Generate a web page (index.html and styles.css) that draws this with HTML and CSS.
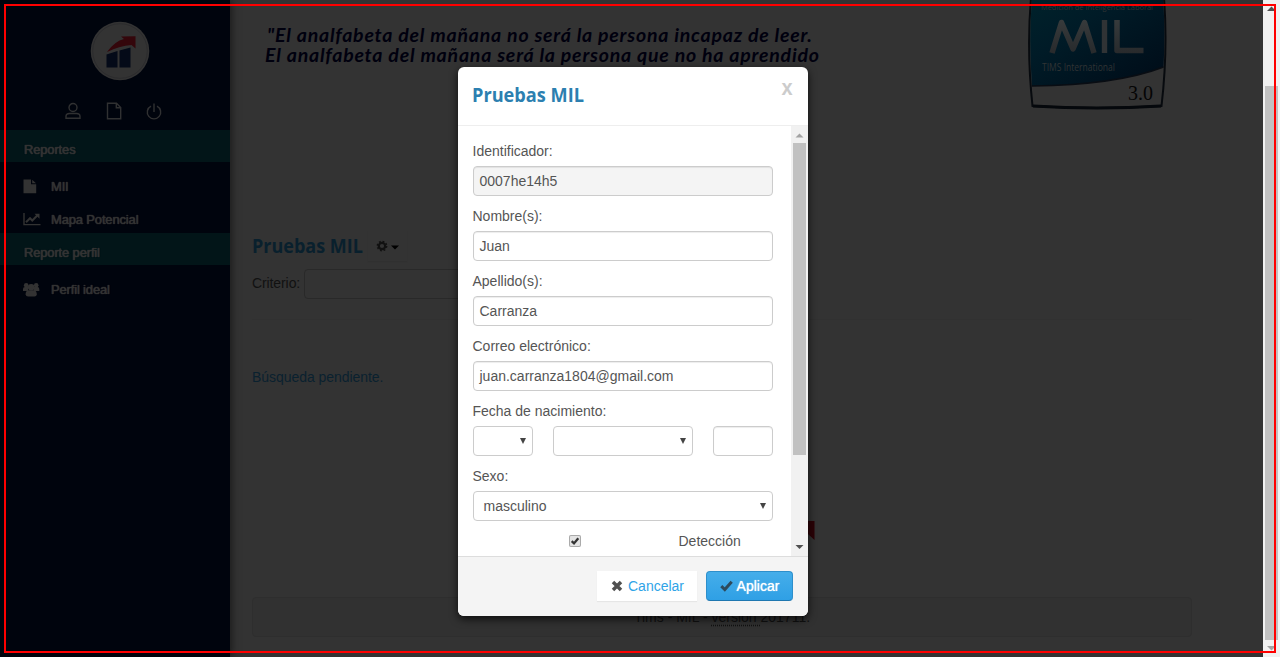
FILE: index.html
```html
<!DOCTYPE html>
<html lang="es">
<head>
<meta charset="utf-8">
<title>Pruebas MIL</title>
<link rel="stylesheet" href="styles.css">
</head>
<body>
<div class="page">
  <aside class="sidebar">
    <svg class="avatar" width="60" height="60" viewBox="0 0 60 60">
      <circle cx="30" cy="30" r="29.3" fill="#333"/>
      <circle cx="30" cy="30" r="27.3" fill="none" stroke="#292a2c" stroke-width=".8"/>
      <path d="M16.5 33.5 27.5 30V46.500H16.500zM29.500 29.500 40.500 26.500V46.500H29.500z" fill="#040a18"/>
      <path d="M17 31Q25 20 34 18L31 15.500 45.500 15.200V27.500L41.500 24Q29 25 17 31z" fill="#34060b"/>
    </svg>
    <nav class="quick">
      <svg width="16" height="18" viewBox="0 0 16 18"><circle cx="8" cy="5.500" r="4"/><path d="M1 16.300V14.500Q1 11.500 4.500 11.500H11.500Q15 11.500 15 14.500V16.300z"/></svg>
      <svg width="16" height="18" viewBox="0 0 16 18"><path d="M1.500 1.200H10.500L14.700 5.500V16.800H1.500zM10.300 1.500V5.800H14.500"/></svg>
      <svg width="16" height="18" viewBox="0 0 16 18"><path d="M5 4.200A6.700 6.700 0 1 0 11 4.200M8 1.500V10"/></svg>
    </nav>
    <h2 class="group">Reportes</h2>
    <ul class="menu">
      <li><svg width="18" height="15" viewBox="0 0 18 15"><path d="M.5.500H8V5.300H13.200V14.300H.5zM9.200.7 13 4.200H9.200z"/></svg>MII</li>
      <li><svg width="18" height="15" viewBox="0 0 18 15"><path d="M.3 1H1.700V12H17.500V13.200H.3z"/><path d="M3 10.200 7 6.200 9.300 8.500 14.500 3.300" fill="none" stroke="#333" stroke-width="2"/><path d="M11.500 1.800H16.500V6.800z"/></svg>Mapa Potencial</li>
    </ul>
    <h2 class="group">Reporte perfil</h2>
    <ul class="menu">
      <li><svg width="18" height="15" viewBox="0 0 18 15"><circle cx="3.200" cy="3.200" r="2.300"/><circle cx="13.200" cy="3.200" r="2.300"/><path d="M0 9V7Q0 5 2 5H5V9zM11 9V5H14.500Q16.300 5 16.300 7V9z"/><circle cx="8.200" cy="5.200" r="3.300"/><path d="M2.600 12.500Q2.600 8.500 5.500 8.300H11Q13.800 8.500 13.800 12.500 13.500 14.600 11.500 14.600H5Q3 14.600 2.600 12.500z"/></svg>Perfil ideal</li>
    </ul>
  </aside>
  <main class="content">
    <header class="banner">
      <svg class="quote" width="580" height="75" viewBox="0 0 580 75">
        <text x="15" y="41.500" textLength="545">"El analfabeta del mañana no será la persona incapaz de leer.</text>
        <text x="13" y="61.500" textLength="554">El analfabeta del mañana será la persona que no ha aprendido</text>
      </svg>
      <svg class="badge" width="142" height="112" viewBox="0 0 142 112">
        <defs>
          <linearGradient id="blue" x1="0" y1="0" x2="1" y2="1"><stop offset="0" stop-color="#00222b"/><stop offset=".35" stop-color="#001b27"/><stop offset="1" stop-color="#000b17"/></linearGradient>
          <linearGradient id="metal" x1="0" y1="0" x2="0" y2="1"><stop offset="0" stop-color="#373b3c"/><stop offset="1" stop-color="#282a2c"/></linearGradient>
        </defs>
        <path d="M4-2Q-.5 50 5.500 106Q70 110 134.500 106Q141 50 137-2z" fill="#333" stroke="#070a0e" stroke-width="2"/>
        <path d="M5-2Q1.500 40 5 86Q90 85 136.500 67Q138.500 30 136-2z" fill="url(#blue)"/>
        <path d="M5 86Q90 85 136.500 67" fill="none" stroke="#090d13" stroke-width="1.500"/>
        <path d="M6 106Q70 110 134 106" fill="none" stroke="#05080c" stroke-width="3"/>
        <text class="badge-small" x="14" y="10" textLength="112" lengthAdjust="spacingAndGlyphs">Medición de Inteligencia  Laboral</text>
        <path d="M25 53 34.500 22.500 46 49 57.500 22.500 67 53M90 20V50.500H116.500" fill="none" stroke="url(#metal)" stroke-width="5.500" stroke-linejoin="round"/>
        <path d="M74.800 20H80.200V53H74.800z" fill="#303335"/>
        <text class="badge-name" x="15" y="71" textLength="73" lengthAdjust="spacingAndGlyphs">TIMS International</text>
        <text class="badge-version" x="101" y="99.500" textLength="25" lengthAdjust="spacingAndGlyphs">3.0</text>
      </svg>
    </header>
    <div class="heading">
      <svg class="title title-dim" width="116" height="32" viewBox="0 0 116 32"><text x="0" y="23" textLength="111" lengthAdjust="spacingAndGlyphs">Pruebas MIL</text></svg>
      <span class="gear">
        <svg width="24" height="12" viewBox="0 0 24 12"><circle cx="6" cy="6" r="3.200" fill="none" stroke="#111" stroke-width="2.200"/><circle cx="6" cy="6" r="4.700" fill="none" stroke="#111" stroke-width="1.400" stroke-dasharray="1.850 1.840"/><path d="M15 5.500H23L19 9.500z" fill="#000"/></svg>
      </span>
    </div>
    <div class="search"><span>Criterio:</span><div class="search-box"></div></div>
    <hr class="rule">
    <p class="pending">Búsqueda pendiente.</p>
    <svg class="ribbon" width="8" height="19" viewBox="0 0 8 19"><path d="M0 0 6.500 0V19L0 13z" fill="#2b0206"/></svg>
    <footer class="footer"><span>Tims - MIL - <u>versión </u>201711.</span></footer>
  </main>
  <div class="scroll">
    <svg width="17" height="18" viewBox="0 0 17 18"><path d="M4 11 8.500 6.500 13 11z" fill="#505050"/></svg>
    <div class="scroll-thumb"></div>
    <svg width="17" height="17" viewBox="0 0 17 17"><path d="M4 6H13L8.500 10.500z" fill="#a3a3a3"/></svg>
  </div>
</div>

<section class="modal">
  <header class="modal-head">
    <svg class="title" width="116" height="32" viewBox="0 0 116 32"><text x="0" y="23" textLength="112" lengthAdjust="spacingAndGlyphs">Pruebas MIL</text></svg>
    <span class="close">x</span>
  </header>
  <div class="modal-body">
    <form class="form">
      <label>Identificador:</label><div class="field disabled">0007he14h5</div>
      <label>Nombre(s):</label><div class="field">Juan</div>
      <label>Apellido(s):</label><div class="field">Carranza</div>
      <label>Correo electrónico:</label><div class="field">juan.carranza1804@gmail.com</div>
      <label>Fecha de nacimiento:</label>
      <div class="date">
        <div class="field select"><span></span><i class="arrow"></i></div>
        <div class="field select"><span></span><i class="arrow"></i></div>
        <div class="field"></div>
      </div>
      <label>Sexo:</label><div class="field select"><span>masculino</span><i class="arrow"></i></div>
      <div class="check-row">
        <span class="checkbox"><svg width="12" height="12" viewBox="0 0 12 12"><path d="M2.700 6.200 5 8.400 9.300 3.200" fill="none" stroke="#333" stroke-width="2.300"/></svg></span>
        <span>Detección</span>
      </div>
    </form>
    <div class="modal-scroll">
      <svg width="17" height="17" viewBox="0 0 17 17"><path d="M4.500 11.500 8.500 7.500 12.500 11.500z" fill="#a3a3a3"/></svg>
      <div class="modal-thumb"></div>
      <svg width="17" height="17" viewBox="0 0 17 17"><path d="M4.500 6H12.500L8.500 10z" fill="#505050"/></svg>
    </div>
  </div>
  <footer class="modal-foot">
    <button class="btn"><svg width="12" height="12" viewBox="0 0 12 12"><path d="M2 2 10 10M10 2 2 10" stroke="#505050" stroke-width="3.500"/></svg>Cancelar</button>
    <button class="btn primary"><svg width="13" height="12" viewBox="0 0 13 12"><path d="M1.300 6.200 4.800 9.500 11.700 1.800" fill="none" stroke="#2d4a5c" stroke-width="3"/></svg>Aplicar</button>
  </footer>
</section>
<div class="outline"></div>
</body>
</html>
```

FILE: styles.css
```css
* { box-sizing: border-box; }
body {
  margin: 0;
  overflow: hidden;
  background: #333;
  color: #111;
  font: 14px/20px "Liberation Sans", Arial, sans-serif;
}
.page { display: flex; height: 657px; }

.sidebar {
  width: 230px;
  flex: none;
  padding-top: 21px;
  background: #00040d;
  box-shadow: 1px 0 8px #181818;
  color: #333;
  font-size: 13px;
  letter-spacing: -0.16px;
  text-shadow: 0 0 1px #333, 0 0 1px #333;
  z-index: 1;
}
.avatar { display: block; margin: 0 0 21px 89.500px; }
.quick {
  display: flex;
  gap: 24.500px;
  height: 28px;
  padding-left: 65px;
}
.quick svg { fill: none; stroke: #303132; stroke-width: 1.400; }
.group {
  height: 32px;
  margin: 0;
  padding: 4px 0 0 24px;
  background: #021518;
  font-size: 13px;
  font-weight: normal;
  line-height: 32px;
}
.menu { margin: 0; padding: 8px 0 0; list-style: none; }
.menu li {
  display: flex;
  align-items: center;
  gap: 10px;
  height: 33px;
  padding-left: 23px;
}
.menu li:last-child:not(:first-child) { height: 30px; padding-top: 3px; }
.menu svg { fill: #333; }

.content {
  display: flex;
  flex: 1;
  flex-direction: column;
  padding-left: 22px;
}
.banner { display: flex; height: 232px; }
.quote text {
  fill: #00000e;
  font: italic bold 19.5px Lato, sans-serif;
}
.badge { margin-left: 195px; }
.badge text { fill: #303334; font-family: "Open Sans", sans-serif; }
.badge .badge-small { font-size: 8px; }
.badge .badge-name { font-size: 10px; }
.badge .badge-version { fill: #050505; font: 22px "Liberation Serif", serif; }
.heading { display: flex; align-items: center; height: 28px; }
.title text { fill: #2c7fb0; font: 700 20px "Open Sans", "Noto Sans", sans-serif; }
.title-dim text { fill: #09202d; }
.gear {
  display: flex;
  align-items: center;
  padding: 9px 7px 9px 8px;
  box-shadow: 0 1px 1px #303030;
}
.search { display: flex; gap: 4px; margin-top: 9px; line-height: 29px; }
.search span { letter-spacing: -0.1px; }
.search-box { width: 210px; height: 30px; border: 1px solid #292929; border-radius: 4px; }
.rule { width: 940px; height: 1px; margin: 20px 0 0; border: 0; background: #313131; }
.pending { margin: 47px 0 0; color: #0a212f; letter-spacing: -0.05px; }
.ribbon { margin: 134px 0 0 556px; }
.footer {
  width: 940px;
  height: 40px;
  margin-top: 57px;
  border: 1px solid #2e2e2e;
  border-radius: 4px;
  background: #313131;
  text-align: center;
  line-height: 39px;
}
.footer u { text-decoration: underline dotted; text-underline-offset: 3px; }

.scroll { width: 17px; background: #f1f1f1; }
.scroll svg, .modal-scroll svg { display: block; }
.scroll-thumb { height: 554px; margin: 68px 2px 0; background: #c1c1c1; }

.modal {
  position: absolute;
  z-index: 2;
  top: 67px;
  left: 458px;
  display: flex;
  width: 350px;
  height: 549px;
  flex-direction: column;
  overflow: hidden;
  border-radius: 6px;
  background: #fff;
  box-shadow: 0 3px 9px #000b;
  color: #555;
}
.modal-head {
  display: flex;
  height: 59px;
  justify-content: space-between;
  padding: 12px 15.500px 0 14px;
  border-bottom: 1px solid #eee;
}
.close { color: #ccc; font-size: 20px; font-weight: bold; line-height: 20px; transform: scaleY(1.1); }
.modal-body { display: flex; height: 430px; overflow: hidden; }
.form { width: 333px; padding: 15px 18px 0 15px; }
.form label { display: block; height: 20px; margin-left: -0.500px; }
.field {
  height: 30px;
  margin: 5px 0 10px;
  padding: 0 5.500px;
  border: 1px solid #ccc;
  border-radius: 4px;
  box-shadow: inset 0 1px 1px #00000013;
  line-height: 28px;
}
.disabled { background: #f4f4f4; }
.date { display: grid; grid-template-columns: 60px 140px 60px; gap: 20px; }
.select {
  display: flex;
  align-items: center;
  justify-content: space-between;
  padding: 0 6px 0 9.500px;
  box-shadow: none;
}
.arrow { width: 0; border: solid transparent; border-width: 6px 3.500px 0; border-top-color: #444; margin-top: -1px; }
.check-row { display: flex; align-items: center; gap: 97.500px; padding-left: 96px; }
.checkbox {
  width: 12px;
  height: 12px;
  border-radius: 2px;
  background: #e3e3e3;
  box-shadow: inset 0 0 0 1px #aaa;
}
.checkbox svg { display: block; }
.modal-scroll { width: 17px; background: #f1f1f1; }
.modal-thumb { width: 13px; height: 312px; margin: 0 2px 84px; background: #c1c1c1; }
.modal-foot {
  display: flex;
  flex: 1;
  justify-content: flex-end;
  gap: 9px;
  padding: 14px 15px 0;
  border-top: 1px solid #ddd;
  background: #f4f4f4;
}
.btn {
  display: flex;
  width: 100px;
  height: 30px;
  align-items: center;
  justify-content: center;
  gap: 5px;
  padding: 0 0 0 1px;
  border: 0;
  background: #fff;
  box-shadow: 0 1px 1px #e6e6e6;
  color: #2fa4e7;
  font: inherit;
}
.primary {
  width: 87px;
  gap: 4px;
  padding: 0;
  border: 1px solid #2d8fcb;
  border-bottom-color: #1f77b0;
  border-radius: 4px;
  background: linear-gradient(#45aeea, #2fa0e5);
  box-shadow: none;
  color: #fff;
  text-shadow: 0 0 1px #fff;
}
.outline {
  position: absolute;
  z-index: 3;
  top: 4px;
  left: 4px;
  width: 1272px;
  height: 649px;
  border: 2px solid #f00;
}
```
